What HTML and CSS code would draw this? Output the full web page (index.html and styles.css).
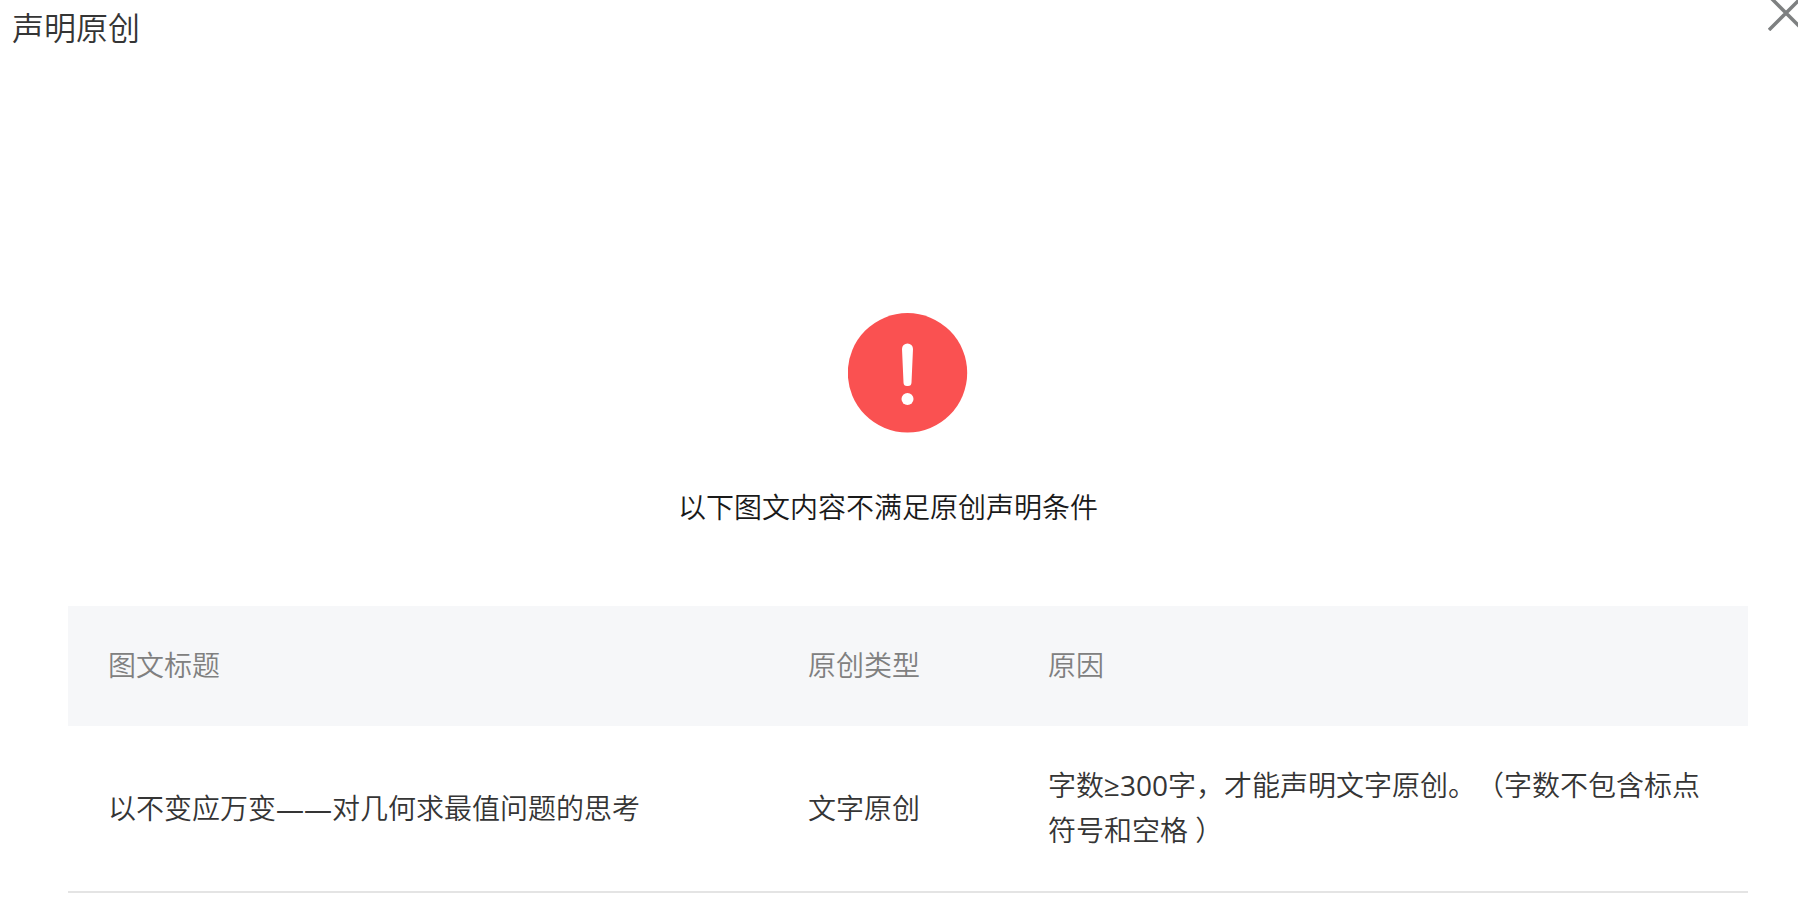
FILE: index.html
```html
<!DOCTYPE html>
<html lang="zh-CN">
<head>
    <meta charset="UTF-8">
    <meta name="viewport" content="width=device-width, initial-scale=1.0">
    <title>声明原创</title>
    <link rel="stylesheet" href="styles.css">
</head>
<body>

    <header class="dialog-header">
        <h1>声明原创</h1>
        <button type="button" class="close-btn" aria-label="关闭">
            <svg width="36" height="36" viewBox="0 0 36 36">
                <path d="M1 1 35 35M35 1 1 35" stroke="#7e8081" stroke-width="3.500" fill="none"/>
            </svg>
        </button>
    </header>

    <main class="dialog-body">
        <div class="message">
            <svg class="warn-icon" width="120" height="120" viewBox="0 0 120 120">
                <circle cx="59.500" cy="59.800" r="59.700" fill="#fa5151"/>
                <path d="M54 36a5.500 5.500 0 0 1 11 0L63.500 69.500Q63.400 73 60 73H59Q55.600 73 55.500 69.500Z" fill="#fff"/>
                <circle cx="59.500" cy="86" r="6" fill="#fff"/>
            </svg>
            <h2>以下图文内容不满足原创声明条件</h2>
        </div>

        <table class="reason-table">
            <thead>
                <tr>
                    <th class="col-title">图文标题</th>
                    <th class="col-type">原创类型</th>
                    <th>原因</th>
                </tr>
            </thead>
            <tbody>
                <tr>
                    <td>以不变应万变——对几何求最值问题的思考</td>
                    <td>文字原创</td>
                    <td>字数≥300字，才能声明文字原创。（字数不包含标点符号和空格 ）</td>
                </tr>
            </tbody>
        </table>
    </main>

</body>
</html>
```

FILE: styles.css
```css
* {
    box-sizing: border-box;
}

body {
    margin: 0;
    background-color: #fff;
    color: #353535;
    font-family: "Open Sans", "Noto Sans CJK SC DemiLight", "Noto Sans CJK SC", sans-serif;
    font-size: 28px;
    font-weight: 400;
    line-height: 45px;
    text-spacing-trim: space-all;
    overflow: hidden;
}

h1, h2 {
    margin: 0;
    font-weight: 400;
}

.dialog-header {
    display: flex;
    justify-content: space-between;
    align-items: flex-start;
    height: 56px;
    padding-left: 12px;
}

.dialog-header h1 {
    font-size: 32px;
    line-height: 56px;
}

/* the close button hangs over the corner of the window */
.close-btn {
    margin: -5px -6px 0 0;
    padding: 0;
    border: none;
    background: none;
    cursor: pointer;
}

.close-btn svg {
    display: block;
}

.dialog-body {
    padding: 257px 50px 0 68px;
}

.message {
    text-align: center;
}

.warn-icon {
    display: block;
    margin: 0 auto 52px;
}

.message h2 {
    padding-right: 40px;
    color: #1a1a1a;
    font-size: 28px;
    line-height: 45px;
}

.reason-table {
    width: 100%;
    margin-top: 76px;
    border-collapse: collapse;
    table-layout: fixed;
}

th, td {
    padding: 37px 40px 38px;
    text-align: left;
    font-weight: 400;
}

th {
    height: 120px;
    background-color: #f6f7f9;
    color: #808080;
}

td {
    border-bottom: 2px solid #e4e4e4;
}

.col-title {
    width: 700px;
}

.col-type {
    width: 240px;
}
```
